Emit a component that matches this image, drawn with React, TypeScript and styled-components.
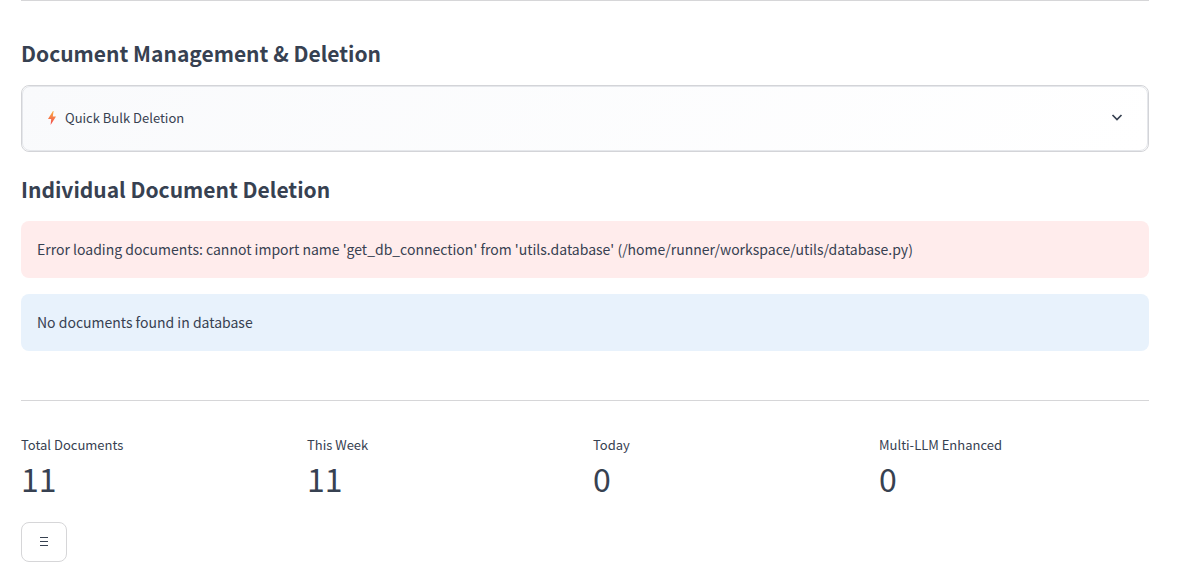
import React from "react";
import styled, { createGlobalStyle } from "styled-components";

const GlobalStyle = createGlobalStyle`
  *, *::before, *::after { box-sizing: border-box; }
  body {
    margin: 0;
    background: #ffffff;
    color: #374151;
    font-family: "Noto Sans CJK JP", "Noto Sans", sans-serif;
    font-size: 14px;
    line-height: 24px;
  }
`;

const Page = styled.main`
  padding: 0 37px 5px 21px;
`;

const Divider = styled.hr`
  height: 1px;
  margin: 0;
  border: 0;
  background: #d6d6d8;
`;

const Section = styled.section`
  display: flex;
  flex-direction: column;
  gap: 16px;
  padding-top: 24px;
`;

const DocumentArea = styled.div`
  padding: 15px 0 49px;
`;

const Heading = styled.h3`
  margin: 0 0 3px;
  font-size: 21px;
  line-height: 26px;
  font-weight: 700;
`;

const Expander = styled.details`
  border: 1px solid #d3d4d8;
  border-radius: 8px;
  background: #ffffff;
`;

const ExpanderHeader = styled.summary`
  display: flex;
  align-items: center;
  gap: 8px;
  height: 65px;
  padding: 0 24px 2px;
  border: 1px solid #e5e7eb;
  border-radius: 8px;
  background: linear-gradient(135deg, #f9fafc 0%, #ffffff 100%);
  font-size: 13px;
  cursor: pointer;
  list-style: none;

  &::-webkit-details-marker { display: none; }
`;

const ExpanderTitle = styled.span`
  flex: 1;
`;

const Alert = styled.div<{ $tone: "error" | "info" }>`
  padding: 16px 16px 17px;
  border-radius: 8px;
  background: ${({ $tone }) => ($tone === "error" ? "#ffecec" : "#e8f2fc")};
`;

const Metrics = styled.dl`
  display: grid;
  grid-template-columns: repeat(4, minmax(0, 1fr));
  gap: 16px;
  margin: 0;
  padding: 34px 0 21px;
`;

const MetricLabel = styled.dt`
  font-size: 13px;
  line-height: 20px;
`;

const MetricValue = styled.dd`
  margin: 0;
  font-size: 32px;
  line-height: 46px;
`;

const MenuButton = styled.button`
  display: flex;
  align-items: center;
  justify-content: center;
  width: 46px;
  height: 40px;
  padding: 0;
  border: 1px solid #d6d6d8;
  border-radius: 8px;
  background: #ffffff;
  color: inherit;
  cursor: pointer;
`;

const metrics = [
  { label: "Total Documents", value: 11 },
  { label: "This Week", value: 11 },
  { label: "Today", value: 0 },
  { label: "Multi-LLM Enhanced", value: 0 },
];

function BoltIcon() {
  return (
    <svg width="10" height="16" viewBox="0 0 10 16" aria-hidden="true">
      <defs>
        <linearGradient id="bolt" x1="0" y1="0" x2="0" y2="1">
          <stop offset="0" stopColor="#fbb040" />
          <stop offset="1" stopColor="#f0434f" />
        </linearGradient>
      </defs>
      <path d="M6 1 1 9h3.200L3.600 15 9 6.600H5.800L6.600 1Z" fill="url(#bolt)" />
    </svg>
  );
}

function ChevronIcon() {
  return (
    <svg width="12" height="12" viewBox="0 0 12 12" fill="none" stroke="currentColor" strokeWidth="1.7" aria-hidden="true">
      <path d="m1.500 3 4.500 4.500L10.500 3" />
    </svg>
  );
}

function MenuIcon() {
  return (
    <svg width="8" height="10" viewBox="0 0 8 10" stroke="currentColor" aria-hidden="true">
      <path d="M0 .5h8M0 4.500h8M0 8.500h8" />
    </svg>
  );
}

export default function App() {
  return (
    <>
      <GlobalStyle />
      <Page>
        <Divider />
        <DocumentArea>
          <Section>
            <Heading>Document Management &amp; Deletion</Heading>
            <Expander>
              <ExpanderHeader>
                <BoltIcon />
                <ExpanderTitle>Quick Bulk Deletion</ExpanderTitle>
                <ChevronIcon />
              </ExpanderHeader>
            </Expander>
          </Section>
          <Section>
            <Heading>Individual Document Deletion</Heading>
            <Alert $tone="error" role="alert">
              Error loading documents: cannot import name 'get_db_connection' from 'utils.database' (/home/runner/workspace/utils/database.py)
            </Alert>
            <Alert $tone="info" role="status">No documents found in database</Alert>
          </Section>
        </DocumentArea>
        <Divider />
        <Metrics>
          {metrics.map(({ label, value }) => (
            <div key={label}>
              <MetricLabel>{label}</MetricLabel>
              <MetricValue>{value}</MetricValue>
            </div>
          ))}
        </Metrics>
        <MenuButton type="button" aria-label="Menu">
          <MenuIcon />
        </MenuButton>
      </Page>
    </>
  );
}
